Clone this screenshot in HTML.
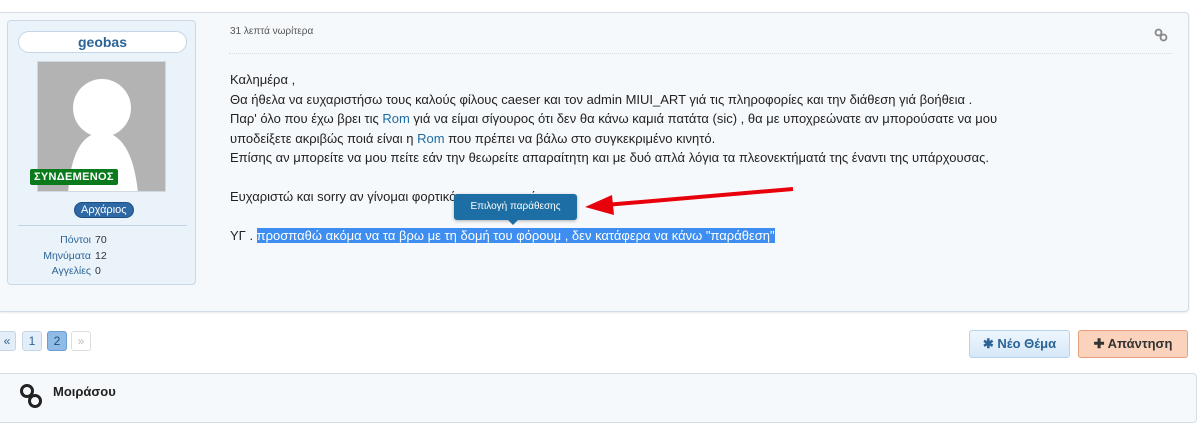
<!DOCTYPE html>
<html><head><meta charset="utf-8"><style>
*{box-sizing:border-box;margin:0;padding:0}
body{width:1197px;height:411px;overflow:hidden;background:#fff;font-family:"Liberation Sans",Arial,sans-serif;position:relative;color:#333}
.panel{position:absolute;left:-3px;top:12px;width:1192px;height:300px;background:#f6f9fc;border:1px solid #d3dde8;border-radius:4px;box-shadow:0 1px 2px rgba(0,0,0,.08)}
.card{position:absolute;left:7px;top:20px;width:189px;height:265px;background:#eaf2fa;border:1px solid #cbd9e7;border-radius:4px}
.name{position:absolute;left:10px;top:10px;width:169px;height:22px;background:#fff;border:1px solid #c6d5e4;border-radius:11px;text-align:center;font-weight:bold;color:#2a6496;font-size:14px;line-height:20px}
.av{position:absolute;left:29px;top:40px;width:129px;height:131px;background:#b3b3b3;border:1px solid #d0d8e0;overflow:hidden}
.online{position:absolute;left:22px;top:148px;background:#0b7a1c;color:#fff;font-size:11px;font-weight:bold;padding:2px 4px;border-radius:2px;letter-spacing:.3px}
.rank{position:absolute;left:66px;top:181px;background:#2f69a5;color:#fff;font-size:11px;padding:1px 6px;border-radius:9px;border:1px solid #1d4f85}
.hr{position:absolute;left:10px;top:204px;width:169px;border-top:1px solid #c2d3e4}
.stats{position:absolute;left:0;top:212px;width:189px;font-size:10.5px;line-height:15.5px}
.stats div{display:flex}.stats span.l{width:87px;text-align:right;color:#2a6496;padding-right:4px}
.date{position:absolute;left:230px;top:26px;font-size:10px;color:#555}
.dl{position:absolute;left:229px;top:53px;width:944px;border-top:1px dotted #d4dbe2}
.body{position:absolute;left:230px;top:70px;font-size:13px;line-height:19.5px;color:#222}
.body a{color:#1e6aa0;text-decoration:none}
.sel{background:#3d8ef0;color:#fff}
.tip{position:absolute;left:454px;top:194px;width:123px;height:26px;background:#1c6ea4;border-radius:3px;color:#fff;font-size:10px;text-align:center;line-height:25px;box-shadow:0 1px 3px rgba(0,0,0,.3)}
.tip:after{content:"";position:absolute;left:54px;bottom:-5px;border:5px solid transparent;border-top-color:#1c6ea4;border-bottom:0}
.pg{position:absolute;top:331px;height:20px;border:1px solid #c6d5e4;border-radius:3px;background:#e4eef8;color:#2a6496;font-size:12px;text-align:center;line-height:18px}
.btn{position:absolute;top:330px;height:28px;border-radius:3px;font-size:13px;font-weight:bold;line-height:26px;text-align:center}
.share{position:absolute;left:-3px;top:373px;width:1200px;height:50px;background:#f6f9fc;border:1px solid #d3dde8;border-radius:4px}
</style></head><body>
<div class="panel"></div>
<div class="card">
 <div class="name">geobas</div>
 <div class="av"><svg width="129" height="131" viewBox="0 0 129 131"><circle cx="64" cy="46" r="29" fill="#fff"/><path d="M30 131 Q34 72 64 70 Q94 72 100 131Z" fill="#fff"/></svg></div>
 <div class="online">ΣΥΝΔΕΜΕΝΟΣ</div>
 <div class="rank">Αρχάριος</div>
 <div class="hr"></div>
 <div class="stats"><div><span class="l">Πόντοι</span>70</div><div><span class="l">Μηνύματα</span>12</div><div><span class="l">Αγγελίες</span>0</div></div>
</div>
<div class="date">31 λεπτά νωρίτερα</div>
<svg style="position:absolute;left:1154px;top:28px" width="14" height="14" viewBox="0 0 14 14"><circle cx="4.5" cy="4.5" r="3" fill="none" stroke="#888" stroke-width="1.8"/><circle cx="9.5" cy="9.5" r="3" fill="none" stroke="#888" stroke-width="1.8"/></svg>
<div class="dl"></div>
<div class="body">
Καλημέρα ,<br>
Θα ήθελα να ευχαριστήσω τους καλούς φίλους caeser και τον admin MIUI_ART γιά τις πληροφορίες και την διάθεση γιά βοήθεια .<br>
Παρ' όλο που έχω βρει τις <a>Rom</a> γιά να είμαι σίγουρος ότι δεν θα κάνω καμιά πατάτα (sic) , θα με υποχρεώνατε αν μπορούσατε να μου<br>
υποδείξετε ακριβώς ποιά είναι η <a>Rom</a> που πρέπει να βάλω στο συγκεκριμένο κινητό.<br>
Επίσης αν μπορείτε να μου πείτε εάν την θεωρείτε απαραίτητη και με δυό απλά λόγια τα πλεονεκτήματά της έναντι της υπάρχουσας.<br><br>
Ευχαριστώ και sorry αν γίνομαι φορτικός με τις ερωτήσεις .<br><br>
ΥΓ . <span class="sel">προσπαθώ ακόμα να τα βρω με τη δομή του φόρουμ , δεν κατάφερα να κάνω "παράθεση"</span>
</div>
<div class="tip">Επιλογή παράθεσης</div>
<svg style="position:absolute;left:585px;top:185px" width="210" height="30" viewBox="0 0 210 30"><line x1="208" y1="4" x2="20" y2="20" stroke="#e8000b" stroke-width="4"/><polygon points="0,22 27,10 29,30" fill="#e8000b"/></svg>
<div class="pg" style="left:-2px;width:18px;background:#e4eef8">«</div>
<div class="pg" style="left:22px;width:20px">1</div>
<div class="pg" style="left:47px;width:20px;background:#8fbbe6;border-color:#6a9fd2;color:#1a4f80">2</div>
<div class="pg" style="left:71px;width:20px;background:#fff;color:#bbb;border-color:#ddd">»</div>
<div class="btn" style="left:969px;width:101px;background:linear-gradient(#eef6fd,#d6e8f8);border:1px solid #b8d2ea;color:#2a6496">✱ Νέο Θέμα</div>
<div class="btn" style="left:1078px;width:110px;background:#fbd3bc;border:1px solid #e8a07c;color:#333">✚ Απάντηση</div>
<div class="share"></div>
<svg style="position:absolute;left:19px;top:383px" width="26" height="28" viewBox="0 0 26 28"><circle cx="8" cy="8" r="5.5" fill="none" stroke="#222" stroke-width="3"/><circle cx="16" cy="18" r="5.5" fill="none" stroke="#222" stroke-width="3"/></svg>
<div style="position:absolute;left:53px;top:384px;font-size:13px;font-weight:bold;color:#222">Μοιράσου</div>
</body></html>
